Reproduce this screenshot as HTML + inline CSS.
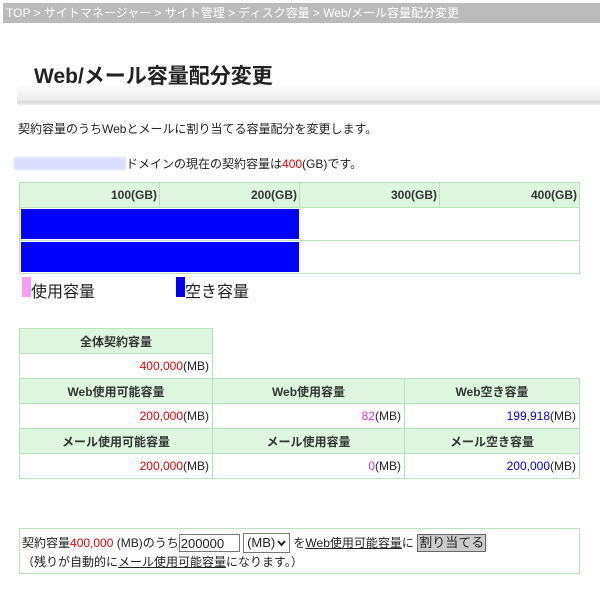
<!DOCTYPE html>
<html><head><meta charset="utf-8"><style>
*{margin:0;padding:0;box-sizing:border-box}
body{width:600px;height:592px;background:#fff;font-family:"Liberation Sans","Noto Sans CJK JP",sans-serif;font-size:12px;color:#222;position:relative;overflow:hidden}
.abs{position:absolute}
.bc{left:3px;top:3px;width:597px;height:20px;background:#bbb;color:#fff;font-size:12px;line-height:20px;padding-left:3px;white-space:nowrap}
.ttl{left:17px;top:55px;width:583px;height:50px;background:linear-gradient(#fff 0%,#fff 55%,#eee 90%,#ddd 92%,#ddd 96%,#f0f0f0 100%)}
.ttl span{position:absolute;left:17px;top:5px;font-size:21px;font-weight:bold;color:#222}
table{border-collapse:collapse;position:absolute}
td,th{border:1px solid #b9e3bd;font-size:12px}
th{background:#def5e0;font-weight:bold;color:#333}
.g th{text-align:right;padding-right:2px;height:25px}
.g td{height:33px;padding:1px}
.t th{height:25px;text-align:center}
.t td{height:25px;text-align:right;padding-right:3px}
.r{color:#e00}.p{color:#d3d}.b{color:#00e}
u{text-decoration:underline}
</style></head><body>
<div class="abs bc">TOP &gt; サイトマネージャー &gt; サイト管理 &gt; ディスク容量 &gt; Web/メール容量配分変更</div>
<div class="abs ttl"><span>Web/メール容量配分変更</span></div>
<div class="abs" style="left:18px;top:120px">契約容量のうちWebとメールに割り当てる容量配分を変更します。</div>
<div class="abs" style="left:14px;top:157px;width:112px;height:13px;background:#dcdcff;filter:blur(1px)"></div>
<div class="abs" style="left:126px;top:155px">ドメインの現在の契約容量は<span class="r">400</span>(GB)です。</div>
<table class="g" style="left:19px;top:182px;width:561px">
<tr><th style="width:140px">100(GB)</th><th style="width:140px">200(GB)</th><th style="width:140px">300(GB)</th><th>400(GB)</th></tr>
<tr><td colspan="4"><div style="width:278px;height:30px;background:#00f"></div></td></tr>
<tr><td colspan="4"><div style="width:278px;height:30px;background:#00f"></div></td></tr>
</table>
<div class="abs" style="left:22px;top:277px;width:9px;height:20px;background:#fa9ef5"></div>
<div class="abs" style="left:31px;top:278px;font-size:16px">使用容量</div>
<div class="abs" style="left:176px;top:277px;width:9px;height:20px;background:#00f"></div>
<div class="abs" style="left:185px;top:278px;font-size:16px">空き容量</div>
<table class="t" style="left:19px;top:328px;width:561px">
<tr><th style="width:193px">全体契約容量</th><td colspan="2" style="border:none;border-left:1px solid #b9e3bd"></td></tr>
<tr><td><span class="r">400,000</span>(MB)</td><td colspan="2" style="border:none;border-left:1px solid #b9e3bd"></td></tr>
<tr><th>Web使用可能容量</th><th style="width:192px">Web使用容量</th><th>Web空き容量</th></tr>
<tr><td><span class="r">200,000</span>(MB)</td><td><span class="p">82</span>(MB)</td><td><span class="b">199,918</span>(MB)</td></tr>
<tr><th>メール使用可能容量</th><th>メール使用容量</th><th>メール空き容量</th></tr>
<tr><td><span class="r">200,000</span>(MB)</td><td><span class="p">0</span>(MB)</td><td><span class="b">200,000</span>(MB)</td></tr>
</table>
<div class="abs" style="left:19px;top:528px;width:561px;height:46px;border:1px solid #b9e3bd"></div>
<div class="abs" style="left:22px;top:534px;white-space:nowrap;line-height:18px">契約容量<span class="r">400,000</span> (MB)のうち<span style="display:inline-block;width:61px;height:18px;border:1px solid #777;vertical-align:top;font-size:13px;padding-left:1px">200000</span> <span style="display:inline-block;width:47px;height:20px;border:1px solid #777;vertical-align:top;font-size:13px;padding-left:3px;margin-top:-1px;position:relative">(MB)<svg style="position:absolute;right:3px;top:6px" width="9" height="7"><path d="M1 1L4.5 5L8 1" stroke="#222" stroke-width="2" fill="none"/></svg></span> を<u>Web使用可能容量</u>に <span style="display:inline-block;height:18px;border:1px solid #666;background:#ccc;padding:0 1px;vertical-align:top;font-size:13px;line-height:16px">割り当てる</span></div>
<div class="abs" style="left:22px;top:553px;white-space:nowrap">（残りが自動的に<u>メール使用可能容量</u>になります。）</div>
</body></html>
